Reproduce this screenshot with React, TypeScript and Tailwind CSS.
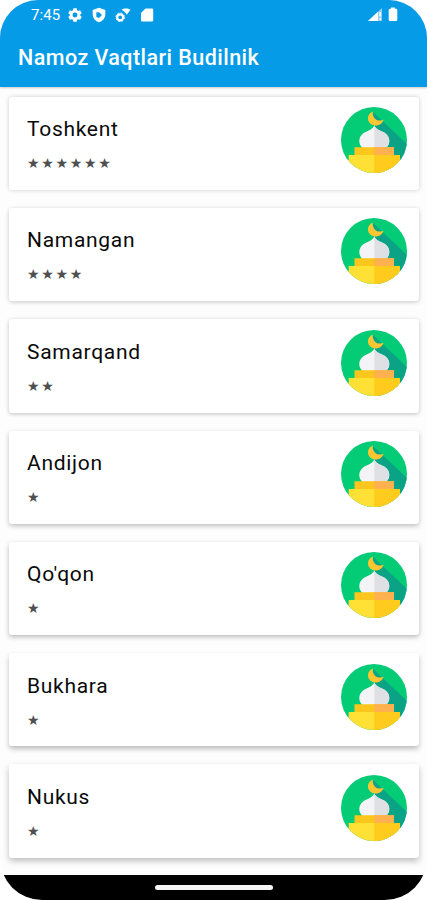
import React from 'react';

interface City {
  name: string;
  stars: number;
  shadow: string;
}

const cities: City[] = [
  { name: 'Toshkent', stars: 6, shadow: 'shadow-[0_0px_4px_rgba(0,0,0,0.2)]' },
  { name: 'Namangan', stars: 4, shadow: 'shadow-[0_1px_4px_rgba(0,0,0,0.22)]' },
  { name: 'Samarqand', stars: 2, shadow: 'shadow-[0_1px_4px_rgba(0,0,0,0.24)]' },
  { name: 'Andijon', stars: 1, shadow: 'shadow-[0_2px_5px_rgba(0,0,0,0.25)]' },
  { name: "Qo'qon", stars: 1, shadow: 'shadow-[0_2px_5px_rgba(0,0,0,0.27)]' },
  { name: 'Bukhara', stars: 1, shadow: 'shadow-[0_3px_5px_rgba(0,0,0,0.25)]' },
  { name: 'Nukus', stars: 1, shadow: 'shadow-[0_3px_6px_rgba(0,0,0,0.26)]' },
];

function MosqueIcon({ id }: { id: string }) {
  return (
    <svg viewBox="0 0 66 66" className="h-[66px] w-[66px] shrink-0">
      <defs>
        <clipPath id={id}>
          <circle cx="33" cy="33" r="33" />
        </clipPath>
      </defs>
      <g clipPath={`url(#${id})`}>
        <rect width="66" height="66" fill="#04cc76" />
        <path d="M32 5L66 37V66H33V18Z" fill="#0aa386" />
        {/* dome */}
        <path d="M33.300 18C32.300 22.500 27 23.300 23 25.800C17 30 17 37 21.500 41H45.100C49.600 37 49.600 30 43.600 25.800C39.600 23.300 34.300 22.500 33.300 18Z" fill="#f4f4f6" />
        <path d="M33.300 18C34.300 22.500 39.600 23.300 43.600 25.800C49.600 30 49.600 37 45.100 41H33.300Z" fill="#dfe0e4" />
        {/* steps */}
        <path d="M13.500 40.300H53V48.500H13.500Z" fill="#fcc61c" />
        <path d="M33.300 40.300H53V48.500H33.300Z" fill="#ffb04f" />
        <path d="M7.700 48H59V53H66V66H0V53H7.700Z" fill="#ffe136" />
        <path d="M33.300 48H59V53H66V66H33.300Z" fill="#ffcb1c" />
        {/* crescent */}
        <path
          d="M32 4.500C26.500 6.500 25.500 12.800 29 16.300C33.200 20.300 41 18.800 42.500 12.800C39.500 14.200 36 13.700 33.800 11.400C31.800 9.300 31.200 7 32 4.500Z"
          fill="#fcc633"
        />
      </g>
    </svg>
  );
}

function StatusBar() {
  return (
    <div className="flex h-[30px] items-center pl-[31px] pr-[29px] text-white">
      <span className="w-[36px] text-[15px] leading-[30px] tracking-[0.1px]">7:45</span>
      <svg viewBox="0 0 24 24" className="h-4 w-4" fill="currentColor">
        <path
          fillRule="evenodd"
          d="M9.500 2h5l.6 3 1.600.9 2.900-1 2.500 4.300-2.300 2v1.700l2.300 2-2.500 4.300-2.900-1-1.600.9-.6 3h-5l-.6-3-1.600-.9-2.900 1-2.500-4.300 2.300-2v-1.700l-2.300-2 2.500-4.300 2.900 1 1.600-.9ZM12 8.300a3.700 3.700 0 1 0 0 7.400 3.700 3.700 0 0 0 0-7.400Z"
        />
      </svg>
      <svg viewBox="0 0 24 24" className="ml-2 h-4 w-4" fill="currentColor">
        <path fillRule="evenodd" d="M12 1L21.500 4.500V11C21.500 17 17 21.500 12 23C7 21.500 2.500 17 2.500 11V4.500ZM8 8V15L12 16.500L16.500 12L12 8Z" />
      </svg>
      <svg viewBox="0 0 16 16" className="ml-2 h-4 w-4">
        <circle cx="5.200" cy="10.300" r="3" fill="none" stroke="currentColor" strokeWidth="2.200" />
        <circle cx="5.200" cy="10.300" r="4.300" fill="none" stroke="currentColor" strokeWidth="1" strokeDasharray="1.800 1.580" />
        <path d="M6.500 2.800C9 1.200 13 1.200 15.500 2.800L11.700 7.800C10.800 5.800 9 4 6.500 2.800Z" fill="currentColor" />
      </svg>
      <svg viewBox="0 0 16 16" className="ml-2 h-4 w-4" fill="currentColor">
        <path d="M6.500 1.500H13Q14.200 1.500 14.200 2.700V13.300Q14.200 14.500 13 14.500H3.200Q2 14.500 2 13.300V6Z" />
      </svg>
      <div className="ml-auto flex">
        <svg viewBox="0 0 16 16" className="h-4 w-4">
          <path d="M0 14L14 1V14Z" fill="#8fcff5" />
          <path d="M0 14L10 4.700V14Z" fill="#ffffff" />
          <path d="M12.200 5V9.500M12.200 11.300V13" stroke="#ffffff" strokeWidth="1.600" />
        </svg>
        <svg viewBox="0 0 10 16" className="ml-1 h-4 w-[10px]" fill="currentColor">
          <path d="M3 .5H7V1.800H8Q9.300 1.800 9.300 3.100V12.700Q9.300 14 8 14H2Q.7 14 .7 12.700V3.100Q.7 1.800 2 1.800H3Z" />
        </svg>
      </div>
    </div>
  );
}

function CityCard({ city }: { city: City }) {
  return (
    <div className={`flex h-[93.300px] justify-between rounded-[3px] bg-white pl-[18px] pr-[12px] pt-[10.500px] ${city.shadow}`}>
      <div className="pt-[8px]">
        <h2 className="text-[21px] leading-[28px] tracking-[0.700px] text-[#0a0a0a]">{city.name}</h2>
        <p className="mt-[12px] font-['DejaVu_Sans',sans-serif] text-[14px] leading-[16px] tracking-[1.700px] text-[#505050]">
          {'★'.repeat(city.stars)}
        </p>
      </div>
      <MosqueIcon id={`mosque-${city.name.replace("'", '')}`} />
    </div>
  );
}

export default function App() {
  return (
    <div className="h-[900px] w-[427px] bg-white">
      <div className="flex h-full flex-col overflow-hidden rounded-t-[38px] rounded-b-[42px] bg-[#fdfdfd] font-['Roboto',sans-serif]">
        <header className="h-[87px] shrink-0 bg-[#069be7] shadow-[0_1px_2px_rgba(0,0,0,0.2)]">
          <StatusBar />
          <h1 className="pl-[18px] pt-[14px] text-[21.500px] font-medium leading-[28px] tracking-[0.450px] text-white">Namoz Vaqtlari Budilnik</h1>
        </header>
        <main className="flex flex-1 flex-col gap-[18px] overflow-hidden pl-[9px] pr-[8px] pt-[9.700px]">
          {cities.map((city) => (
            <CityCard key={city.name} city={city} />
          ))}
        </main>
        <footer className="flex h-[25px] shrink-0 justify-center bg-black pt-[10px]">
          <div className="h-[5px] w-[118px] rounded-full bg-[#f5f5f5]" />
        </footer>
      </div>
    </div>
  );
}
